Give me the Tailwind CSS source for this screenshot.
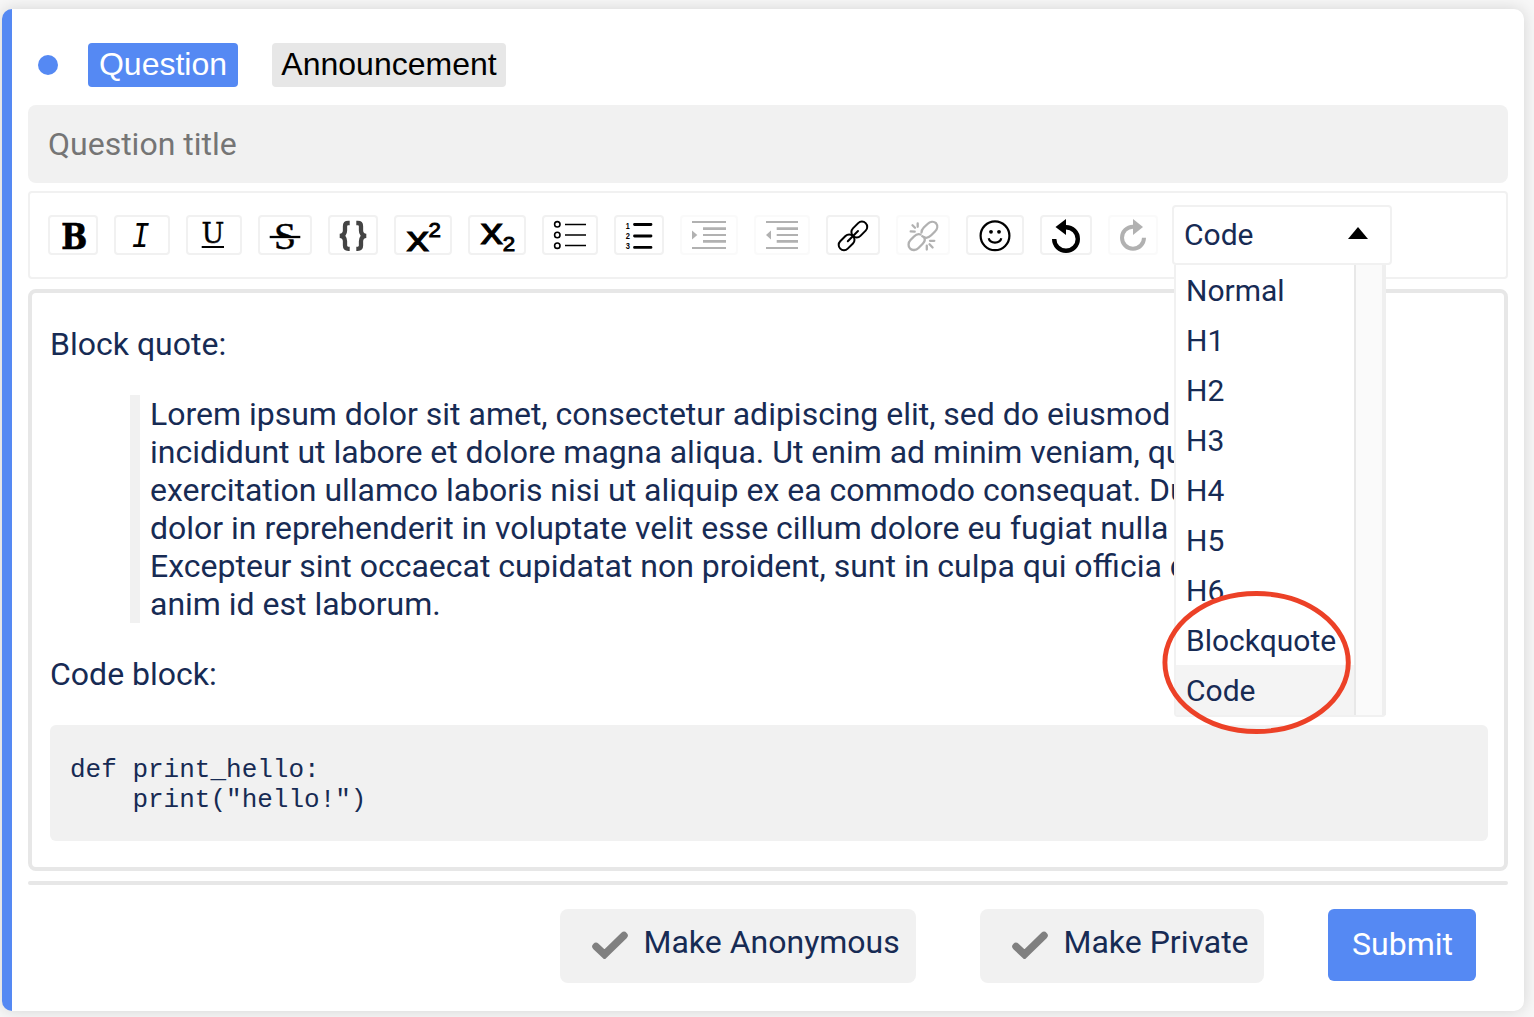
<!DOCTYPE html>
<html lang="en">
<head>
<meta charset="utf-8">
<title>New question</title>
<script src="https://cdn.jsdelivr.net/npm/@tailwindcss/browser@4"></script>
</head>
<body class="h-[1017px] overflow-hidden bg-[#f7f7f7] pt-[9px] pl-[2px] font-['Roboto',sans-serif] text-[#172b54]">
<main class="relative flex h-[1002px] w-[1522px] flex-col rounded-[10px] border-l-[10px] border-[#5589f3] bg-white px-4 shadow-[0_0_16px_rgba(0,0,0,0.14)]">

  <div class="mt-[34px] flex h-11 items-center pl-[10px] font-['Liberation_Sans',sans-serif] text-[32px]">
    <span class="size-5 rounded-full bg-[#5589f3]"></span>
    <button class="ml-[30px] flex h-11 w-[150px] items-center justify-center rounded-[4px] bg-[#5589f3] pb-[2px] text-white"><span>Question</span></button>
    <button class="ml-[34px] flex h-11 w-[234px] items-center justify-center rounded-[4px] bg-[#e7e7e7] pb-[2px] text-black"><span>Announcement</span></button>
  </div>

  <div class="mt-[18px] flex h-[78px] w-[1480px] items-center rounded-[8px] bg-[#f1f1f1] pl-5 text-[32px] text-[#757575]"><span>Question title</span></div>

  <div class="mt-2 flex h-[88px] w-[1480px] items-center gap-4 rounded-[4px] border-2 border-[#f1f1f1] pl-[18px] text-black">
    <button class="h-10 w-[50px] rounded-[4px] border-2 border-[#f1f1f1]"><svg class="block h-9 w-full overflow-visible" viewBox="0 0 46 36"><text x="11.2" y="31.5" font-family="DejaVu Serif" font-weight="bold" font-size="34.5" stroke="#000" stroke-width=".7" textLength="26" lengthAdjust="spacingAndGlyphs">B</text></svg></button>
    <button class="h-10 w-[56px] rounded-[4px] border-2 border-[#f1f1f1]"><svg class="block h-9 w-full overflow-visible" viewBox="0 0 52 36"><text x="15.500" y="30" font-family="Liberation Mono" font-style="italic" font-size="36.500" textLength="18" lengthAdjust="spacingAndGlyphs">I</text></svg></button>
    <button class="h-10 w-[56px] rounded-[4px] border-2 border-[#f1f1f1]"><svg class="block h-9 w-full overflow-visible" viewBox="0 0 52 36"><text x="13.5" y="26.200" font-family="DejaVu Serif" font-size="27" stroke="#000" stroke-width=".4" textLength="22.800" lengthAdjust="spacingAndGlyphs">U</text><path d="M13.7 30H36" stroke="#000" stroke-width="2"/></svg></button>
    <button class="h-10 w-[54px] rounded-[4px] border-2 border-[#f1f1f1]"><svg class="block h-9 w-full overflow-visible" viewBox="0 0 50 36"><text x="14" y="31.5" font-family="Liberation Serif" font-size="38" stroke="#000" stroke-width=".5" textLength="22" lengthAdjust="spacingAndGlyphs">S</text><path d="M9.7 21.5H40.3" stroke="#fff" stroke-width="1.5"/><path d="M9.7 20H40.3" stroke="#000" stroke-width="2.3"/></svg></button>
    <button class="h-10 w-[50px] rounded-[4px] border-2 border-[#f1f1f1]"><svg class="block h-9 w-full" viewBox="0 0 46 36" fill="none" stroke="#444" stroke-width="4.3"><path d="M19.7 6h-1.5q-3.2 0-3.2 3.2v4.3q0 4.7-5 5.4q5 .7 5 5.4v4.3q0 3.2 3.2 3.2h1.5M26.3 6h1.5q3.2 0 3.2 3.2v4.3q0 4.7 5 5.4q-5 .7-5 5.4v4.3q0 3.2-3.2 3.2h-1.5"/></svg></button>
    <button class="h-10 w-[58px] rounded-[4px] border-2 border-[#f1f1f1]"><svg class="block h-9 w-full overflow-visible" viewBox="0 0 54 36" font-family="Liberation Sans" stroke="#000"><text x="10.500" y="33.500" font-size="35.500" stroke-width=".9" textLength="22.500" lengthAdjust="spacingAndGlyphs">x</text><text x="32.600" y="20" font-size="20" stroke-width=".9" textLength="12.400" lengthAdjust="spacingAndGlyphs">2</text></svg></button>
    <button class="h-10 w-[58px] rounded-[4px] border-2 border-[#f1f1f1]"><svg class="block h-9 w-full overflow-visible" viewBox="0 0 54 36" font-family="Liberation Sans" stroke="#000"><text x="10.500" y="26.700" font-size="36.500" stroke-width=".9" textLength="22.500" lengthAdjust="spacingAndGlyphs">x</text><text x="32.800" y="34" font-size="20" stroke-width=".9" textLength="12.400" lengthAdjust="spacingAndGlyphs">2</text></svg></button>
    <button class="h-10 w-[56px] rounded-[4px] border-2 border-[#f1f1f1]"><svg class="block h-9 w-full" viewBox="0 0 52 36" fill="none" stroke="#000" stroke-width="1.6"><circle cx="13.3" cy="7.3" r="2.7"/><circle cx="13.3" cy="18" r="2.7"/><circle cx="13.3" cy="28.7" r="2.7"/><path d="M21 7.5H42M21 18H42M21 28.5H42"/></svg></button>
    <button class="h-10 w-[50px] rounded-[4px] border-2 border-[#f1f1f1]"><svg class="block h-9 w-full overflow-visible" viewBox="0 0 46 36" font-family="Liberation Sans" font-weight="bold" font-size="9.5"><text x="9.7" y="12.4" textLength="4" lengthAdjust="spacingAndGlyphs">1</text><text x="9.7" y="22" textLength="4.2" lengthAdjust="spacingAndGlyphs">2</text><text x="9.7" y="31.8" textLength="4.2" lengthAdjust="spacingAndGlyphs">3</text><path d="M18.5 7.5H35M18.5 19H35M18.5 30.4H35" stroke="#000" stroke-width="2.8" stroke-linecap="round"/></svg></button>
    <button class="h-10 w-[58px] rounded-[4px] border-2 border-[#f1f1f1] opacity-30"><svg class="block h-9 w-full" viewBox="0 0 54 36" stroke="#000" stroke-width="2"><path d="M10 5H44M21 18H44M10 31H44"/><path d="M21 11.600H44M21 24.400H44" stroke-width="2.700"/><path d="M10 13.6L15.3 18L10 22.4Z" stroke="none"/></svg></button>
    <button class="h-10 w-[56px] rounded-[4px] border-2 border-[#f1f1f1] opacity-30"><svg class="block h-9 w-full" viewBox="0 0 52 36" stroke="#000" stroke-width="2"><path d="M10 5H42M20.7 18H42M10 31H42"/><path d="M20.7 11.600H42M20.7 24.400H42" stroke-width="2.700"/><path d="M15 13.6L10 18L15 22.4Z" stroke="none"/></svg></button>
    <button class="h-10 w-[54px] rounded-[4px] border-2 border-[#f1f1f1]"><svg class="block h-9 w-full" viewBox="0 0 50 36" fill="none" stroke="#000" stroke-width="2"><rect x="-9" y="-5.3" width="18" height="10.6" rx="5.3" transform="translate(18.6 25.3) rotate(-45)"/><rect x="-9" y="-5.3" width="18" height="10.6" rx="5.3" transform="translate(31.3 12.5) rotate(-45)"/><path d="M19.8 24.2L30 14" stroke-linecap="round"/></svg></button>
    <button class="h-10 w-[54px] rounded-[4px] border-2 border-[#f1f1f1] opacity-30"><svg class="block h-9 w-full" viewBox="0 0 50 36" fill="none" stroke="#000" stroke-width="2.3" stroke-linecap="round"><path d="M22.500 17.500C19.500 16.500 17.500 18 16 19.500L12.500 23C10 25.500 10 29.500 12 31.500C14 33.700 18 33.500 20.500 31L24.500 27C26.500 25 27.300 22.500 26.300 20.500"/><path d="M23.500 15.500C23.500 13.500 24.300 12 25.800 10.500L29.500 7C32 4.500 35.700 4 38 6.200C40 8.500 39.500 12 37 14.500L33.200 18.300C30.500 21 27 21.500 24.200 19.200"/><path d="M14.500 8.200L17 10.700M19.700 6.500V9.800M12.700 14.300L16.700 14.700M28.800 28.700V32.500M31.500 27.300L34.600 30.500M32 23.800H36.300"/></svg></button>
    <button class="h-10 w-[58px] rounded-[4px] border-2 border-[#f1f1f1]"><svg class="block h-9 w-full" viewBox="0 0 54 36" fill="none" stroke="#000" stroke-width="2.2"><circle cx="27" cy="18.800" r="14.400"/><path d="M20.700 21.300C22 27 32 27 33.300 21.300"/><circle cx="23" cy="14.800" r="1.900" fill="#000" stroke="none"/><circle cx="31" cy="14.800" r="1.900" fill="#000" stroke="none"/></svg></button>
    <button class="h-10 w-[52px] rounded-[4px] border-2 border-[#f1f1f1]"><svg class="block h-9 w-full" viewBox="0 0 48 36"><path d="M12.200 22A11.800 11.800 0 1 0 24 10.200" fill="none" stroke="#000" stroke-width="4.400"/><path d="M24 2V18L13.500 10Z"/></svg></button>
    <button class="h-10 w-[50px] rounded-[4px] border-2 border-[#f1f1f1] opacity-30"><svg class="block h-9 w-full" viewBox="0 0 46 36"><path d="M34 20.700A11 11 0 1 1 23 9.700" fill="none" stroke="#000" stroke-width="4"/><path d="M23 2V18L33 10Z"/></svg></button>

    <div class="relative -ml-[2px] h-[60px] w-[220px] rounded-[4px] border-2 border-[#f1f1f1] bg-white text-[30px] text-[#172b54]">
      <div class="flex h-14 items-center justify-between pr-[22px] pb-[2px] pl-[10px]">
        <span>Code</span>
        <svg class="mb-[2px] h-3 w-5" viewBox="0 0 20 12"><path d="M10 0L20 12H0Z" fill="#000"/></svg>
      </div>
      <div class="absolute top-[58px] left-0 z-10 flex h-[452px] w-[212px] rounded-b-[4px] border-b-2 border-l-2 border-[#f1f1f1] bg-white">
        <ul class="w-[178px] leading-[48px]">
          <li class="pt-[2px] pl-[10px]"><span>Normal</span></li>
          <li class="pt-[2px] pl-[10px]"><span>H1</span></li>
          <li class="pt-[2px] pl-[10px]"><span>H2</span></li>
          <li class="pt-[2px] pl-[10px]"><span>H3</span></li>
          <li class="pt-[2px] pl-[10px]"><span>H4</span></li>
          <li class="pt-[2px] pl-[10px]"><span>H5</span></li>
          <li class="pt-[2px] pl-[10px]"><span>H6</span></li>
          <li class="pt-[2px] pl-[10px]"><span>Blockquote</span></li>
          <li class="bg-[#f4f4f4] pt-[2px] pl-[10px]"><span>Code</span></li>
        </ul>
        <div class="w-8 border-r-4 border-l-2 border-r-[#efefef] border-l-[#e8e8e8] bg-[#fafafa]"></div>
      </div>
    </div>
  </div>

  <div class="mt-[10px] h-[582px] w-[1480px] rounded-[8px] border-4 border-[#e7e7e7] px-[18px] pt-8 text-[32px] leading-[38px]">
    <p><span>Block quote:</span></p>
    <blockquote class="mt-8 ml-20 border-l-[10px] border-[#f1f1f1] pl-[10px] tracking-[-0.01px] whitespace-nowrap">
      <span>Lorem ipsum dolor sit amet, consectetur adipiscing elit, sed do eiusmod tempor</span><br>
      <span>incididunt ut labore et dolore magna aliqua. Ut enim ad minim veniam, quis nostrud</span><br>
      <span>exercitation ullamco laboris nisi ut aliquip ex ea commodo consequat. Duis aute</span><br>
      <span>dolor in reprehenderit in voluptate velit esse cillum dolore eu fugiat nulla pariatur.</span><br>
      <span class="tracking-normal">Excepteur sint occaecat cupidatat non proident, sunt in culpa qui officia deserunt</span><br>
      <span>anim id est laborum.</span>
    </blockquote>
    <p class="mt-8"><span>Code block:</span></p>
    <pre class="mt-8 h-[116px] w-[1438px] rounded-[6px] bg-[#f1f1f1] px-5 pt-[30px] font-['Liberation_Mono',monospace] text-[26px] leading-[30px]">def print_hello:
    print("hello!")</pre>
  </div>

  <div class="mt-[10px] h-1 w-[1480px] rounded-full bg-[#e7e7e7]"></div>

  <div class="mt-6 flex w-[1480px] items-start justify-end pr-8 text-[32px]">
    <button class="flex h-[74px] w-[356px] items-center rounded-[8px] bg-[#f1f1f1] pl-8">
      <svg class="mt-[-2px] h-[28px] w-9" viewBox="0 0 36 28"><path d="M4 15.500L12.500 23.500L32 4.500" fill="none" stroke="#808080" stroke-width="7.500" stroke-linecap="round"/></svg>
      <span class="ml-[15.5px] pb-2">Make Anonymous</span>
    </button>
    <button class="ml-16 flex h-[74px] w-[284px] items-center rounded-[8px] bg-[#f1f1f1] pl-8">
      <svg class="mt-[-2px] h-[28px] w-9" viewBox="0 0 36 28"><path d="M4 15.500L12.500 23.500L32 4.500" fill="none" stroke="#808080" stroke-width="7.500" stroke-linecap="round"/></svg>
      <span class="ml-[15.5px] pb-2">Make Private</span>
    </button>
    <button class="ml-16 flex h-[72px] w-[148px] items-center justify-center rounded-[6px] bg-[#5589f3] pb-[2px] pl-px text-white"><span>Submit</span></button>
  </div>

  <!-- highlight around the last two menu items -->
  <svg class="absolute top-[580px] left-[1149px] z-20 h-[147px] w-[192px]" viewBox="0 0 192 147"><ellipse cx="95.600" cy="73.500" rx="91.700" ry="69" fill="none" stroke="#ec4127" stroke-width="4.900"/></svg>
</main>
</body>
</html>
